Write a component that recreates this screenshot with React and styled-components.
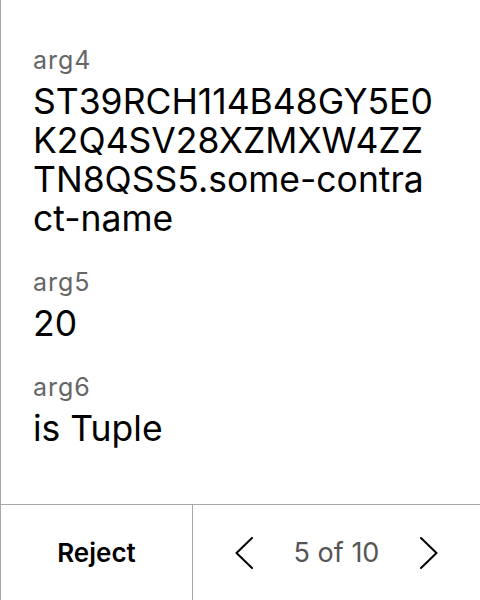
import React from 'react';
import styled, { createGlobalStyle } from 'styled-components';

const GlobalStyle = createGlobalStyle`
  html, body {
    margin: 0;
    padding: 0;
    background: #fff;
  }
  body {
    font-family: Inter, "Noto Sans", "Liberation Sans", sans-serif;
    color: #000;
  }
`;

const Screen = styled.div`
  height: 600px;
  display: flex;
  flex-direction: column;
  border-left: 1px solid #a8a8a8;
  box-sizing: border-box;
`;

const Body = styled.div`
  flex: 1;
  padding: 46px 40px 0 32px;
  display: flex;
  flex-direction: column;
  gap: 30px;
  overflow: hidden;
`;

const Field = styled.div`
  display: flex;
  flex-direction: column;
  gap: 8px;
`;

const Label = styled.div`
  font-size: 25px;
  line-height: 28px;
  letter-spacing: 1px;
  color: #666;
`;

const Value = styled.div`
  font-size: 35.5px;
  line-height: 39px;
  color: #000;
  word-break: break-all;
`;

const Footer = styled.div`
  height: 96px;
  box-sizing: border-box;
  border-top: 1px solid #a8a8a8;
  display: grid;
  grid-template-columns: 192px 1fr;
`;

const RejectButton = styled.button`
  border: none;
  border-right: 1px solid #a8a8a8;
  background: none;
  font-family: inherit;
  font-size: 26px;
  font-weight: 600;
  color: #000;
  padding: 0;
  cursor: pointer;
`;

const Pager = styled.div`
  display: flex;
  align-items: center;
  justify-content: center;
  gap: 41px;
`;

const PageText = styled.span`
  font-size: 27px;
  color: #555;
`;

const Arrow = styled.button`
  border: none;
  background: none;
  padding: 0;
  display: flex;
  cursor: pointer;
`;

const Chevron = ({ dir }) => (
  <svg width="18" height="32" viewBox="0 0 18 32" fill="none">
    <polyline
      points={dir === 'left' ? '17,1 1.5,16 17,31' : '1,1 16.5,16 1,31'}
      stroke="#000"
      strokeWidth="2"
      strokeLinecap="round"
      strokeLinejoin="round"
    />
  </svg>
);

const args = [
  { name: 'arg4', value: 'ST39RCH114B48GY5E0K2Q4SV28XZMXW4ZZTN8QSS5.some-contract-name' },
  { name: 'arg5', value: '20' },
  { name: 'arg6', value: 'is Tuple' },
];

export default function App() {
  return (
    <>
      <GlobalStyle />
      <Screen>
        <Body>
          {args.map((a) => (
            <Field key={a.name}>
              <Label>{a.name}</Label>
              <Value>{a.value}</Value>
            </Field>
          ))}
        </Body>
        <Footer>
          <RejectButton>Reject</RejectButton>
          <Pager>
            <Arrow><Chevron dir="left" /></Arrow>
            <PageText>5 of 10</PageText>
            <Arrow><Chevron dir="right" /></Arrow>
          </Pager>
        </Footer>
      </Screen>
    </>
  );
}
